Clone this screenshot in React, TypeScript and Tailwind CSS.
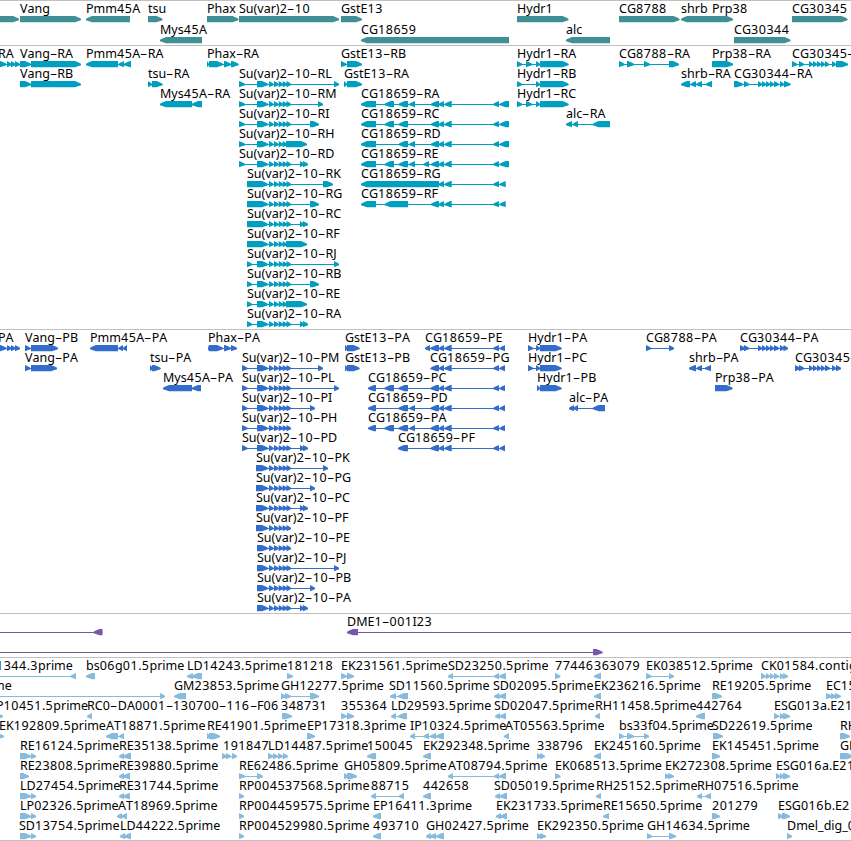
interface Feature {
  x: number
  name: string
  forward: boolean
  blocks: number[]
}

// blocks are flat start/end pairs
const fwd = (x: number, name: string, ...blocks: number[]): Feature => ({ x, name, forward: true, blocks })
const rev = (x: number, name: string, ...blocks: number[]): Feature => ({ x, name, forward: false, blocks })

const HEAD = 6

// shared exons
const SU = [257, 268, 269, 273.5, 274, 278.5, 278.7, 283, 282.7, 287, 286.5, 291]
const SU_SHORT = [257, 268, 269, 273.5, 274, 278.5, 278.7, 283, 282.7, 287]
const SU_BLOCK = [247, 268, 269, 273.5, 274, 278.5, 278.7, 283, 282.7, 287]
const SU_P = [256, 268, 269, 273.5, 274, 278.5, 278.7, 283, 282.7, 287, 286.5, 291]
const CG_MID = [431, 439, 438.5, 444, 444.5, 451.7, 493.3, 499]
const CG_END = [...CG_MID, 499.7, 509]
const CG_END_SHORT = [...CG_MID, 499.7, 505.7]
const CG_P = [430.5, 439, 439, 444, 444.5, 451.7, 493.3, 499, 499.7, 505]

const genes: Feature[][] = [
  [
    fwd(-20, '', -20, 19),
    fwd(20, 'Vang', 20, 81),
    rev(86, 'Pmm45A', 86, 130),
    fwd(148, 'tsu', 148, 162.5),
    fwd(207, 'Phax', 207, 238.5),
    fwd(239, 'Su(var)2-10', 239, 339),
    fwd(341, 'GstE13', 341, 362),
    fwd(517, 'Hydr1', 517, 568.5),
    fwd(619, 'CG8788', 619, 679.5),
    rev(681, 'shrb', 681, 712),
    fwd(712, 'Prp38', 712, 733),
    fwd(792, 'CG30345', 792, 847.5),
  ],
  [
    rev(160, 'Mys45A', 160, 202),
    rev(361, 'CG18659', 361, 509),
    rev(566, 'alc', 566, 610),
    fwd(734, 'CG30344', 734, 790.5),
  ],
]

const transcripts: Feature[][] = [
  [
    fwd(-2, 'RA', -3, 6.5, 7, 11.5, 11, 15.5, 15, 20),
    fwd(20, 'Vang-RA', 20, 31, 31, 81),
    rev(86, 'Pmm45A-RA', 86, 118, 118.5, 124, 124, 131),
    fwd(207, 'Phax-RA', 207, 209, 209, 223, 224, 231, 231, 238.5),
    fwd(341, 'GstE13-RB', 341, 346.5, 347, 362),
    fwd(517, 'Hydr1-RA', 517, 522, 526, 532, 536, 540, 540, 568.5),
    fwd(619, 'CG8788-RA', 619, 624.5, 627, 634, 644, 650, 669, 679),
    fwd(712, 'Prp38-RA', 712, 733),
    fwd(792, 'CG30345-RA', 792, 797, 799, 804, 809, 813, 813, 817, 817, 821, 821, 825, 825, 829, 832, 836, 836, 848),
  ],
  [
    fwd(20, 'Vang-RB', 20, 31, 31, 81),
    fwd(148, 'tsu-RA', 148, 152, 152, 162.5),
    fwd(239, 'Su(var)2-10-RL', 239, 245, ...SU, 334, 339),
    fwd(344, 'GstE13-RA', 344, 347, 347, 362),
    fwd(517, 'Hydr1-RB', 517, 522, 536, 540, 540, 568.5),
    rev(681, 'shrb-RA', 681, 690, 690.7, 696, 696.3, 702, 705.7, 712),
    fwd(734, 'CG30344-RA', 734, 743, 744, 749, 758, 762, 762, 766, 766, 770, 770, 774, 774, 779, 780, 784, 784, 790.5),
  ],
  [
    rev(160, 'Mys45A-RA', 160, 192, 192, 202),
    fwd(239, 'Su(var)2-10-RM', 239, 245, ...SU, 318, 323),
    rev(361, 'CG18659-RA', 361, 376, 384.7, 394, 398.7, 408, 409.3, 415, ...CG_END),
    fwd(517, 'Hydr1-RC', 517, 522, 526, 532, 536, 540, 540, 568.5),
  ],
  [
    fwd(239, 'Su(var)2-10-RI', 239, 245, ...SU, 310, 319),
    rev(361, 'CG18659-RC', 361, 376, 384.7, 394, 398.7, 408, ...CG_END),
    rev(566, 'alc-RA', 566, 572, 572.7, 578, 592.7, 610),
  ],
  [
    fwd(239, 'Su(var)2-10-RH', 239, 245, ...SU_SHORT, 286, 307),
    rev(361, 'CG18659-RD', 361, 376, 398.7, 408, 409.3, 415, ...CG_END),
  ],
  [
    fwd(239, 'Su(var)2-10-RD', 239, 245, ...SU, 300, 304, 303, 308),
    rev(361, 'CG18659-RE', 361, 376, 384.7, 394, 398.7, 408, 409.3, 415, 423.5, 429, ...CG_END),
  ],
  [
    fwd(247, 'Su(var)2-10-RK', ...SU_BLOCK, 286.5, 291, 323, 333),
    rev(361, 'CG18659-RG', 361, 439, ...CG_END_SHORT.slice(2)),
  ],
  [
    fwd(247, 'Su(var)2-10-RG', ...SU_BLOCK, 286.5, 291, 310, 319),
    rev(361, 'CG18659-RF', 361, 376, 384.7, 408, ...CG_END_SHORT),
  ],
  [fwd(247, 'Su(var)2-10-RC', ...SU_BLOCK, 286.5, 291, 300, 304, 303, 308)],
  [fwd(247, 'Su(var)2-10-RF', ...SU_BLOCK, 286, 307)],
  [fwd(247, 'Su(var)2-10-RJ', 247, 252, ...SU, 334, 339)],
  [fwd(247, 'Su(var)2-10-RB', 247, 252, ...SU, 310, 319)],
  [fwd(247, 'Su(var)2-10-RE', 247, 252, ...SU_SHORT, 286, 307)],
  [fwd(247, 'Su(var)2-10-RA', 247, 252, ...SU, 300, 304, 303, 308)],
]

const proteins: Feature[][] = [
  [
    fwd(-2, 'PA', -3, 6.5, 7, 11.5, 11, 15.5, 15, 20),
    fwd(25, 'Vang-PB', 25, 30.5, 31, 58),
    rev(90, 'Pmm45A-PA', 90, 118, 118.5, 123, 123, 127),
    fwd(208, 'Phax-PA', 208, 209, 209, 223, 224, 231, 231, 237),
    fwd(345, 'GstE13-PA', 345, 348, 347, 359.5),
    rev(425, 'CG18659-PE', 425, 430, ...CG_P),
    fwd(528, 'Hydr1-PA', 528, 533, 536, 540, 540, 561.5),
    fwd(646, 'CG8788-PA', 646, 651, 669, 674),
    fwd(740, 'CG30344-PA', 740, 745, 744, 749, 758, 762, 762, 766, 766, 770, 770, 774, 774, 779, 780, 784, 783.5, 788),
  ],
  [
    fwd(25, 'Vang-PA', 25, 30.5, 31, 57),
    fwd(150, 'tsu-PA', 150, 153, 152, 160.5),
    fwd(242, 'Su(var)2-10-PM', 242, 247.5, ...SU, 318, 323),
    fwd(345, 'GstE13-PB', 345, 348, 347, 359.5),
    rev(430, 'CG18659-PG', ...CG_P),
    fwd(528, 'Hydr1-PC', 528, 533, 536, 540, 540, 561.5),
    rev(689, 'shrb-PA', 689, 696, 696.5, 702, 705, 711),
    fwd(795, 'CG30345-PA', 795, 800, 799, 804, 809, 813, 813, 817, 817, 821, 821, 825, 825, 830, 832, 836, 836, 841),
  ],
  [
    rev(163, 'Mys45A-PA', 163, 192, 192, 201),
    fwd(242, 'Su(var)2-10-PL', 242, 247.5, ...SU, 334, 339),
    rev(368, 'CG18659-PC', 368, 376, 384.5, 394, 398.5, 408, ...CG_P),
    fwd(537, 'Hydr1-PB', 537, 540, 540, 561.5),
    fwd(715, 'Prp38-PA', 715, 732.5),
  ],
  [
    fwd(242, 'Su(var)2-10-PI', 242, 247.5, ...SU, 310, 315),
    rev(368, 'CG18659-PD', 368, 376, 398.5, 408, 409.5, 415, ...CG_P),
    rev(569, 'alc-PA', 569, 574, 573.5, 578, 592.7, 605),
  ],
  [
    fwd(242, 'Su(var)2-10-PH', 242, 247.5, ...SU),
    rev(368, 'CG18659-PA', 368, 376, 384.5, 394, 398.5, 408, 409.5, 415, ...CG_P),
  ],
  [
    fwd(242, 'Su(var)2-10-PD', 242, 247.5, ...SU, 300, 304, 303, 308),
    rev(398, 'CG18659-PF', 398, 408, ...CG_P),
  ],
  [fwd(256, 'Su(var)2-10-PK', ...SU_P, 323, 328)],
  [fwd(256, 'Su(var)2-10-PG', ...SU_P, 310, 315)],
  [fwd(256, 'Su(var)2-10-PC', ...SU_P, 300, 304, 303, 308)],
  [fwd(256, 'Su(var)2-10-PF', ...SU_P)],
  [fwd(257, 'Su(var)2-10-PE', ...SU)],
  [fwd(257, 'Su(var)2-10-PJ', ...SU, 334, 339)],
  [fwd(257, 'Su(var)2-10-PB', ...SU, 310, 315)],
  [fwd(257, 'Su(var)2-10-PA', ...SU, 300, 304, 303, 308)],
]

const clones: Feature[][] = [
  [rev(-20, '', -20, -12, 93.5, 102.5), rev(347, 'DME1-001I23', 347, 358, 870, 880)],
  [fwd(-20, '', -20, -12, 593, 602.5)],
]

const ests: Feature[][] = [
  [
    rev(-4, '1344.3prime', -20, -12, 70.5, 76),
    rev(86, 'bs06g01.5prime', 86, 95),
    rev(187, 'LD14243.5prime', 187, 193, 192, 202),
    fwd(287, '181218', 287, 293),
    fwd(341, 'EK231561.5prime', 341, 347, 347, 354),
    rev(448, 'SD23250.5prime', 448, 453, 494, 499, 499, 506),
    fwd(555, '77446', 555, 560.5),
    rev(594, '363079', 594, 601),
    fwd(646, 'EK038512.5prime', 646, 651.5, 669, 674),
    fwd(761, 'CK01584.contig', 761, 766, 766, 770, 770, 774, 774, 779, 780, 784, 783, 788),
  ],
  [
    fwd(-7, 'me', -20, -12, 160, 165),
    rev(174, 'GM23853.5prime', 174, 186),
    fwd(281, 'GH12277.5prime', 281, 286, 285, 291, 310, 319),
    rev(389, 'SD11560.5prime', 390, 396, 398, 408),
    rev(493, 'SD02095.5prime', 494, 499.5, 499, 506),
    rev(594, 'EK236216.5prime', 594, 601),
    fwd(712, 'RE19205.5prime', 712, 722),
    fwd(826, 'EC15', 826, 832, 831, 836, 835, 841),
  ],
  [
    fwd(-4, 'P10451.5prime', -3, 3),
    rev(87, 'RC0-DA0001-130700-116-F06', 87, 92),
    fwd(281, '348731', 282, 292),
    fwd(341, '355364', 341, 347, 347, 354),
    rev(391, 'LD29593.5prime', 391, 396, 398, 407),
    rev(494, 'SD02047.5prime', 495, 500, 499.5, 506),
    rev(595, 'RH11458.5prime', 595, 600),
    rev(696, '442764', 696, 705),
    fwd(774, 'ESG013a.E21', 774, 779, 780, 784, 783, 790),
  ],
  [
    fwd(-1, 'EK192809.5prime', -3, 4),
    rev(106, 'AT18871.5prime', 106, 118, 119, 124),
    fwd(207, 'RE41901.5prime', 207, 210, 209, 220),
    fwd(307, 'EP17318.3prime', 307, 315),
    rev(410, 'IP10324.5prime', 410, 415, 423.5, 429, 430, 436, 436, 444),
    rev(505, 'AT05563.5prime', 504, 509),
    fwd(619, 'bs33f04.5prime', 619, 624, 627, 634, 644, 649),
    fwd(712, 'SD22619.5prime', 713, 723),
    fwd(840, 'RH', 840, 850),
  ],
  [
    fwd(20, 'RE16124.5prime', 20, 31, 31, 36),
    rev(119, 'RE35138.5prime', 119, 124, 123, 131),
    fwd(223, '191847', 222, 227, 226, 231, 232, 237),
    fwd(268, 'LD14487.5prime', 268, 273.5, 273, 278, 278, 283, 283, 288),
    rev(367, '150045', 367, 376),
    rev(423, 'EK292348.5prime', 423, 431),
    fwd(537, '338796', 537, 541, 540, 545),
    rev(594, 'EK245160.5prime', 594, 601),
    fwd(712, 'EK145451.5prime', 712, 720),
    fwd(840, 'GH', 840, 853),
  ],
  [
    fwd(20, 'RE23808.5prime', 20, 29),
    rev(119, 'RE39880.5prime', 119, 124, 123, 130),
    fwd(239, 'RE62486.5prime', 239, 245, 257, 263),
    fwd(344, 'GH05809.5prime', 344, 348, 347, 357),
    rev(448, 'AT08794.5prime', 448, 453, 494, 499, 499, 506),
    fwd(555, 'EK068513.5prime', 555, 560.5),
    fwd(665, 'EK272308.5prime', 665, 669, 668, 674),
    fwd(776, 'ESG016a.E21', 776, 780, 780, 784, 783, 790),
  ],
  [
    fwd(20, 'LD27454.5prime', 20, 31, 31, 36),
    rev(119, 'RE31744.5prime', 119, 124, 123, 130),
    fwd(239, 'RP004537568.5prime', 239, 244),
    rev(371, '88715', 371, 376, 398.7, 404),
    rev(423, '442658', 423, 431),
    rev(494, 'SD05019.5prime', 495, 500, 499.5, 507),
    rev(596, 'RH25152.5prime', 596, 601),
    rev(697, 'RH07516.5prime', 697, 702, 705.5, 711),
  ],
  [
    fwd(20, 'LP02326.5prime', 20, 31, 31, 36),
    rev(118, 'AT18969.5prime', 117, 122, 121.5, 127),
    fwd(239, 'RP004459575.5prime', 239, 244),
    rev(373, 'EP16411.3prime', 373, 381),
    rev(496, 'EK231733.5prime', 496, 501, 500, 507),
    rev(603, 'RE15650.5prime', 603, 609),
    fwd(712, '201279', 712, 720),
    fwd(778, 'ESG016b.E21', 778, 783, 782, 790),
  ],
  [
    fwd(19, 'SD13754.5prime', 20, 31, 31, 36),
    rev(120, 'LD44222.5prime', 120, 125, 124, 131),
    fwd(239, 'RP004529980.5prime', 239, 244),
    rev(373, '493710', 373, 381),
    rev(426, 'GH02427.5prime', 426, 431, 430, 436, 436, 444),
    fwd(537, 'EK292350.5prime', 537, 541, 540, 546),
    fwd(647, 'GH14634.5prime', 647, 652, 669, 676),
    fwd(787, 'Dmel_dig_0', 787, 792),
  ],
]

function blockPath(start: number, end: number, forward: boolean) {
  const head = Math.min(HEAD, end - start)
  const base = forward ? end - head : start + head
  const tip = forward ? end : start
  const tail = forward ? start : end
  const shoulder = tip + (base - tip) * 0.4
  return `M${tail} 0H${base}L${shoulder} 1.6L${tip} 2.8V4.2L${shoulder} 5L${base} 6.3H${tail}Z`
}

function Glyph({ feature }: { feature: Feature }) {
  const { blocks, forward } = feature
  const first = blocks[0]
  const last = blocks[blocks.length - 1]
  let d = ''
  for (let i = 0; i < blocks.length; i += 2) {
    d += blockPath(blocks[i], blocks[i + 1], forward)
  }
  return (
    <g>
      {blocks.length > 2 && <rect x={first} y="3" width={last - first} height="1" />}
      <path d={d} />
    </g>
  )
}

function Label({ feature }: { feature: Feature }) {
  return (
    <span className="absolute -top-px whitespace-pre text-black" style={{ left: feature.x }}>
      {feature.name.split(/(\d+|-)/).map((part, i) => {
        if (part === '-') {
          return (
            <span key={i} className="inline-block w-[7.4px] scale-x-[1.8] text-center">
              -
            </span>
          )
        }
        if (/\d/.test(part)) {
          return (
            <span key={i} className="tracking-[0.53px]">
              {part}
            </span>
          )
        }
        return (
          <span key={i} className={part.startsWith('.') ? 'tracking-[0.25px]' : ''}>
            {part}
          </span>
        )
      })}
    </span>
  )
}

function Track({ rows, color, rowClass, className }: { rows: Feature[][]; color: string; rowClass: string; className: string }) {
  return (
    <section className={`border-t border-[#c0c0c0] pt-px ${className}`}>
      {rows.map((row, i) => (
        <div key={i} className={`relative ${rowClass}`}>
          <svg className={`block h-[21px] w-full overflow-visible pt-3.5 ${color}`} fill="currentColor">
            {row.map((feature, j) => (
              <Glyph key={j} feature={feature} />
            ))}
          </svg>
          {row.map((feature, j) => (
            <Label key={j} feature={feature} />
          ))}
        </div>
      ))}
    </section>
  )
}

export default function App() {
  return (
    <main className="h-[841px] w-[851px] overflow-hidden border-b border-[#c0c0c0] bg-white font-['Noto_Sans',sans-serif] text-[12.5px] leading-[15px] [font-kerning:none]">
      <Track rows={genes} color="text-[#3f8f94]" rowClass="h-[21px]" className="pb-px" />
      <Track rows={transcripts} color="text-[#009fbf]" rowClass="h-5" className="pb-0.5" />
      <Track rows={proteins} color="text-[#336dcc]" rowClass="h-5" className="pb-0.5" />
      <Track rows={clones} color="text-[#7658a8]" rowClass="h-5" className="pb-0.5" />
      <Track rows={ests} color="text-[#87bbde]" rowClass="h-5" className="pb-px" />
    </main>
  )
}
